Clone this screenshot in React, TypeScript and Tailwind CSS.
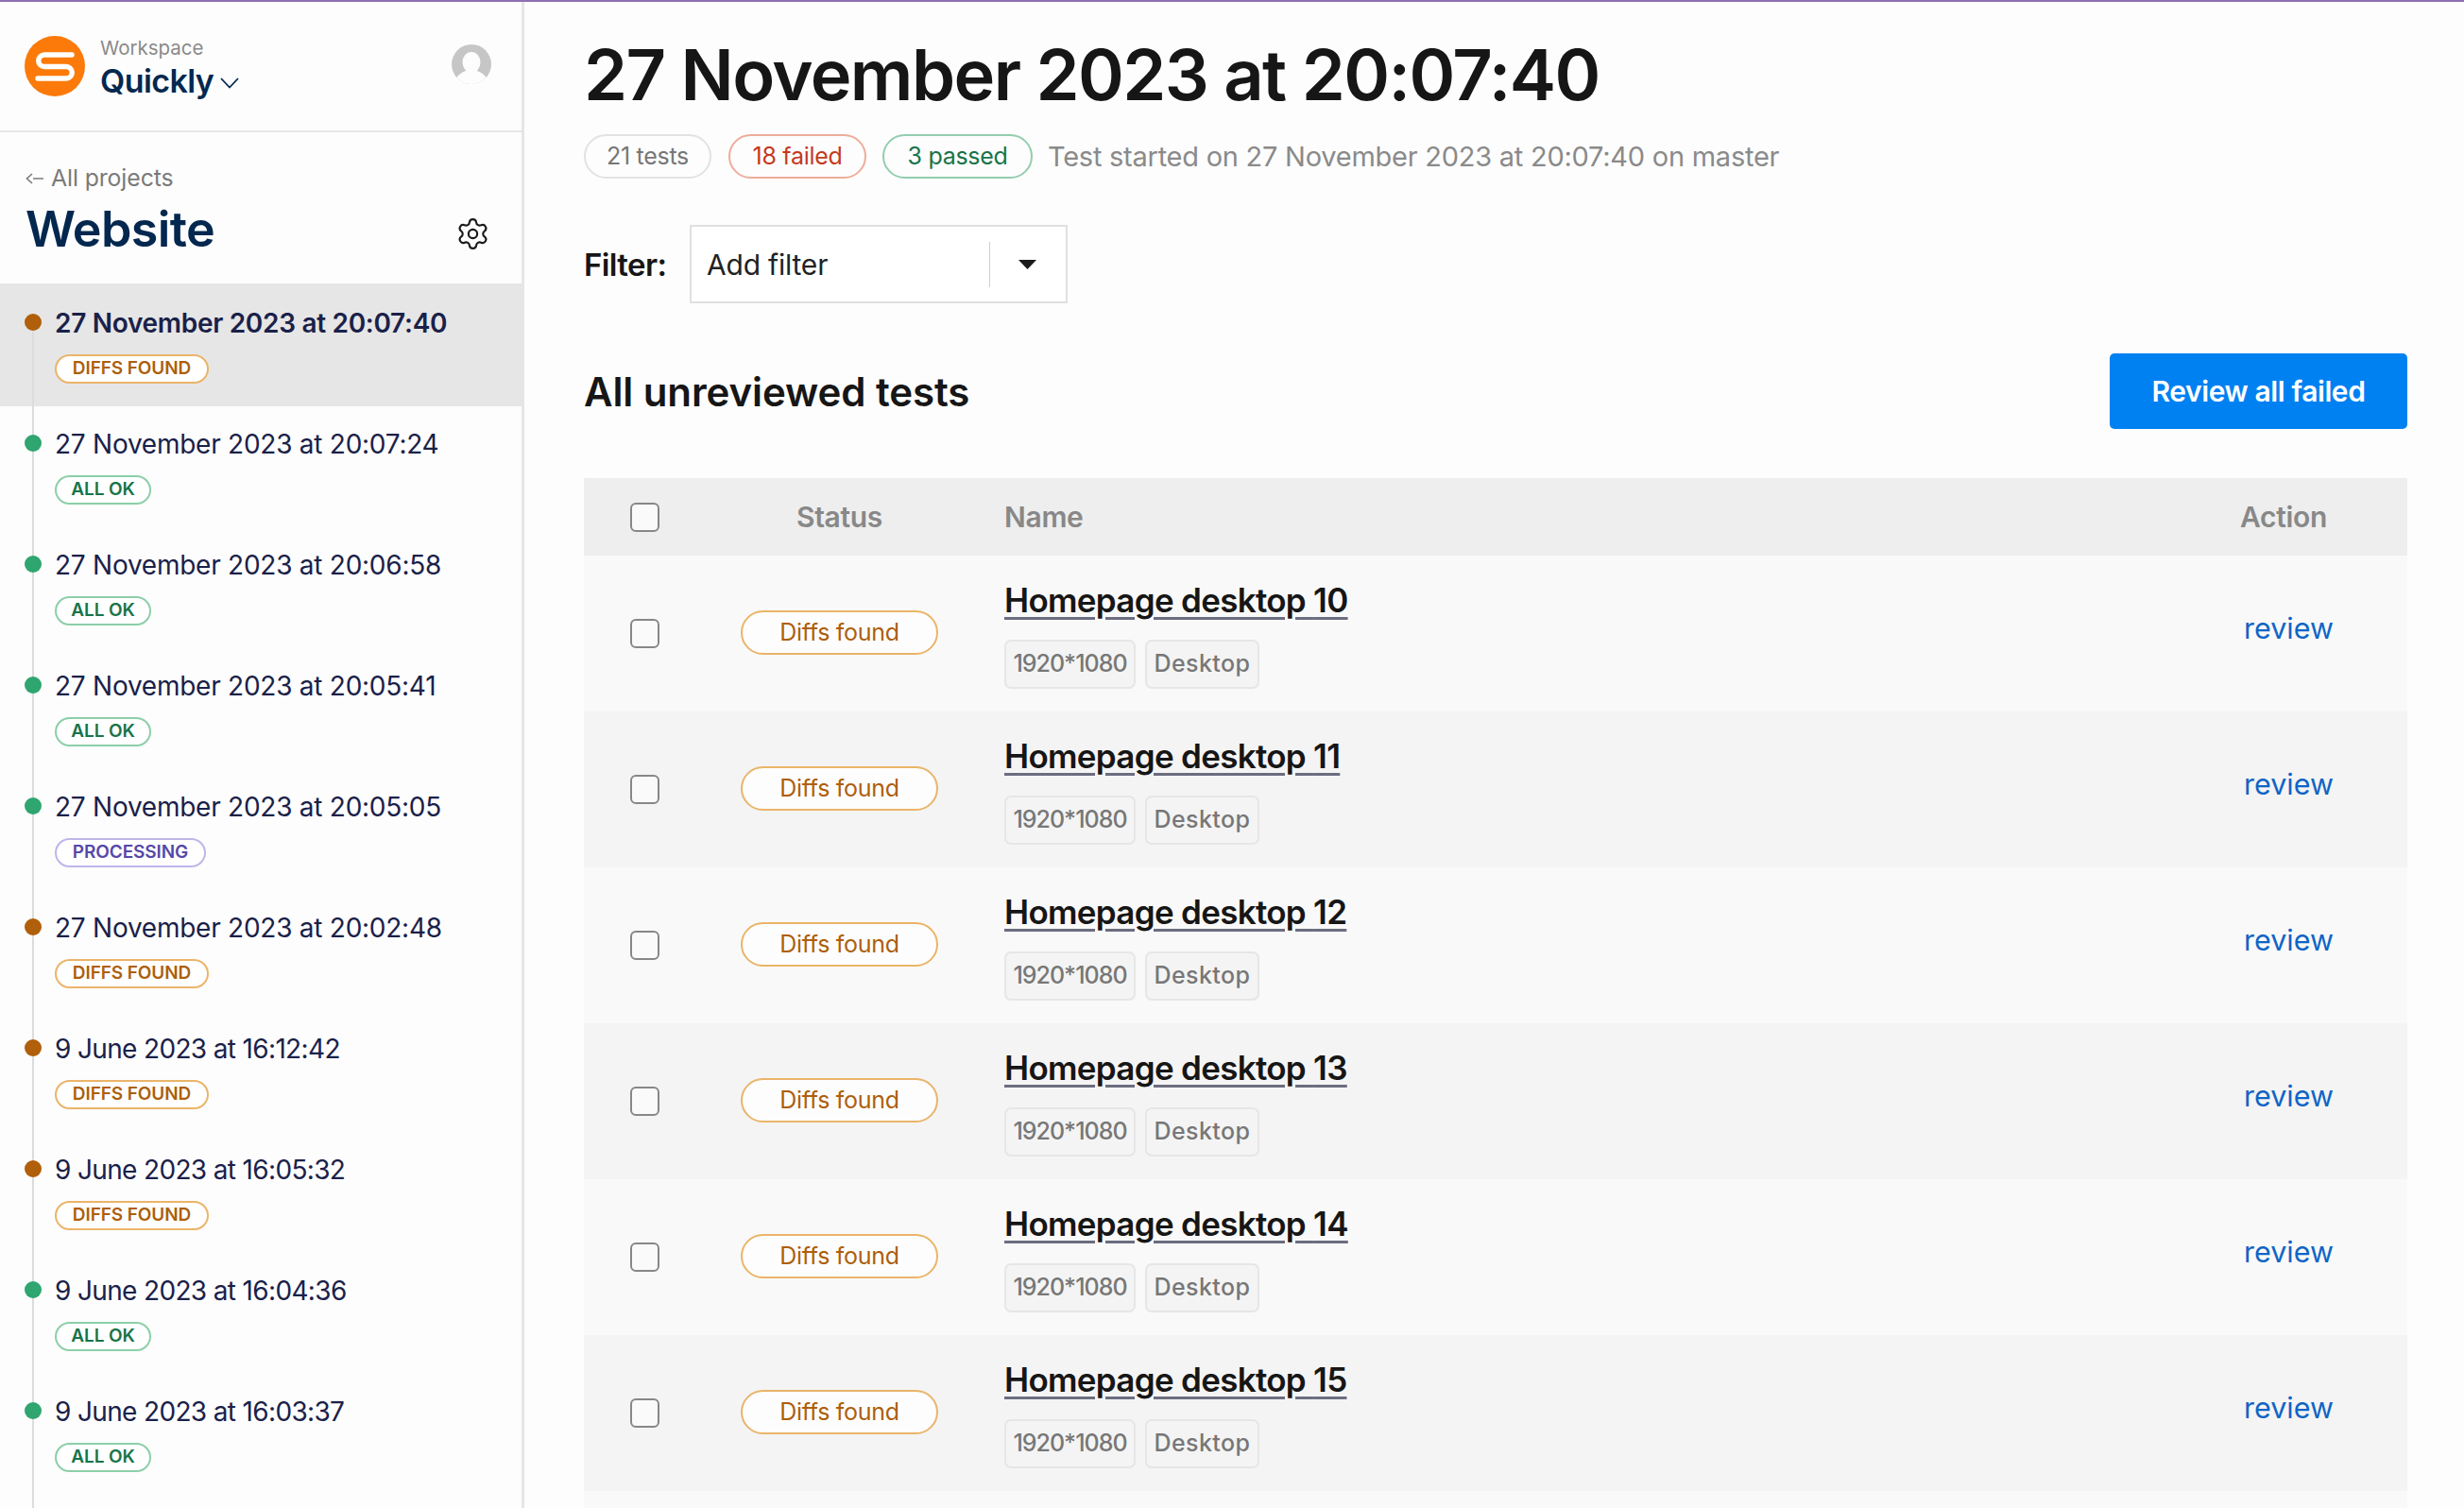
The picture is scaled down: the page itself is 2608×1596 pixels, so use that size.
import { Settings } from "lucide-react";

const runs = [
  { date: "27 November 2023 at 20:07:40", status: "diffs", active: true },
  { date: "27 November 2023 at 20:07:24", status: "ok" },
  { date: "27 November 2023 at 20:06:58", status: "ok" },
  { date: "27 November 2023 at 20:05:41", status: "ok" },
  { date: "27 November 2023 at 20:05:05", status: "processing" },
  { date: "27 November 2023 at 20:02:48", status: "diffs" },
  { date: "9 June 2023 at 16:12:42", status: "diffs", short: true },
  { date: "9 June 2023 at 16:05:32", status: "diffs", short: true },
  { date: "9 June 2023 at 16:04:36", status: "ok", short: true },
  { date: "9 June 2023 at 16:03:37", status: "ok", short: true },
];

const tests = ["10", "11", "12", "13", "14", "15"];

function RunBadge({ status }: { status: string }) {
  if (status === "diffs") {
    return (
      <span className="flex h-[31px] w-[163px] items-center justify-center rounded-full border-2 border-[#ebb469] bg-white text-[19px] font-semibold tracking-[-0.1px] text-[#ad5f0c]">
        DIFFS FOUND
      </span>
    );
  }
  if (status === "processing") {
    return (
      <span className="flex h-[31px] w-[160px] items-center justify-center rounded-full border-2 border-[#bdb6ea] bg-white text-[19px] font-semibold tracking-[-0.1px] text-[#5648a8]">
        PROCESSING
      </span>
    );
  }
  return (
    <span className="flex h-[31px] w-[102px] items-center justify-center rounded-full border-2 border-[#8ccfa8] bg-white text-[19px] font-semibold tracking-[-0.1px] text-[#17744a]">
      ALL OK
    </span>
  );
}

function RunItem({ date, status, active, first, short }: { date: string; status: string; active?: boolean; first?: boolean; short?: boolean }) {
  let titleClass = "h-[34px] whitespace-nowrap text-[28px] leading-[34px] tracking-[-0.25px] text-[#1a2149]";
  if (active) {
    titleClass = "h-[34px] whitespace-nowrap text-[28px] font-semibold leading-[34px] tracking-[-0.3px] text-[#1a2149]";
  } else if (short) {
    titleClass = "h-[34px] whitespace-nowrap text-[28px] leading-[34px] tracking-[-0.65px] text-[#1a2149]";
  }

  return (
    <div className={active ? "mb-[-2px] flex h-[130px] shrink-0 bg-[#e6e6e6] pl-[26px] pt-[25px]" : "flex h-[128px] shrink-0 pl-[26px] pt-[25px]"}>
      <div className="relative mr-[14px] w-[18px]">
        <div className={first ? "absolute bottom-0 left-[8px] top-[17px] w-[2px] bg-[#dcdcdc]" : "absolute bottom-[-24px] left-[8px] top-[-25px] w-[2px] bg-[#dcdcdc]"} />
        <div className={status === "diffs" ? "relative mt-[7px] h-[18px] w-[18px] rounded-full bg-[#b05f0a]" : "relative mt-[7px] h-[18px] w-[18px] rounded-full bg-[#2fa56f]"} />
      </div>
      <div>
        <div className={titleClass}>{date}</div>
        <div className="mt-[16px] flex">
          <RunBadge status={status} />
        </div>
      </div>
    </div>
  );
}

function Sidebar() {
  return (
    <aside className="flex w-[555px] shrink-0 flex-col overflow-hidden border-r-[3px] border-[#e6e6e6]">
      <div className="flex h-[138px] shrink-0 items-start border-b-[2px] border-[#e6e6e6] pl-[26px] pr-[32px] pt-[36px]">
        <svg width="64" height="64" viewBox="0 0 64 64" className="shrink-0">
          <circle cx="32" cy="32" r="32" fill="#fb7a09" />
          <path d="M50 20H21a6.25 6.25 0 0 0 0 12.5h23a6.25 6.25 0 0 1 0 12.5H14" fill="none" stroke="#fff" strokeWidth="5.5" strokeLinecap="round" />
        </svg>
        <div className="ml-[16px]">
          <div className="h-[26px] text-[20.5px] leading-[26px] text-[#8a8a8a]">Workspace</div>
          <div className="flex items-center">
            <span className="text-[34px] font-semibold leading-[44px] tracking-[-0.6px] text-[#04284f]">Quickly</span>
            <svg width="20" height="12" viewBox="0 0 20 12" className="ml-[7px] mt-[3px] shrink-0" fill="none" stroke="#04284f" strokeWidth="1.8">
              <path d="M1 1l9 9.5L19 1" />
            </svg>
          </div>
        </div>
        <svg width="42" height="46" viewBox="0 0 42 46" className="ml-auto mt-[9px] shrink-0">
          <defs>
            <clipPath id="avatar">
              <circle cx="21" cy="21" r="21" />
            </clipPath>
          </defs>
          <circle cx="21" cy="21" r="21" fill="#c6c6c6" />
          <g clipPath="url(#avatar)" fill="#fdfdfd">
            <ellipse cx="21" cy="19" rx="9.5" ry="11" />
            <path d="M1 46c1-10 8-16 14-18h12c6 2 13 8 14 18z" />
          </g>
        </svg>
      </div>
      <div className="flex h-[160px] shrink-0 flex-col pl-[27px] pr-[33px] pt-[31px]">
        <div className="flex h-[36px] items-center text-[#7a7a7a]">
          <svg width="19" height="12" viewBox="0 0 19 12" className="mr-[8px] shrink-0" fill="none" stroke="#7a7a7a" strokeWidth="1.6">
            <path d="M7 1 1.5 6 7 11M8 6h11" />
          </svg>
          <span className="text-[24.8px] tracking-[-0.1px]">All projects</span>
        </div>
        <div className="mt-[4px] flex items-center justify-between">
          <span className="text-[52px] font-semibold leading-[64px] tracking-[-0.6px] text-[#03274f]">Website</span>
          <Settings className="mt-[9px] h-[37px] w-[37px] text-[#1b1b1b]" strokeWidth={1.4} />
        </div>
      </div>
      {runs.map((run, i) => (
        <RunItem key={run.date} {...run} first={i === 0} />
      ))}
    </aside>
  );
}

function Checkbox() {
  return <span className="block h-[31px] w-[31px] rounded-[6px] border-2 border-[#878787] bg-[#fafafa]" />;
}

function TestRow({ num, odd }: { num: string; odd: boolean }) {
  return (
    <div className={odd ? "flex h-[165px] shrink-0 bg-[#f9f9f9]" : "flex h-[165px] shrink-0 bg-[#f4f4f4]"}>
      <div className="w-[166px] shrink-0 pl-[49px] pt-[67px]">
        <Checkbox />
      </div>
      <div className="w-[279px] shrink-0 pt-[58px]">
        <span className="flex h-[47px] w-[209px] items-center justify-center rounded-full border-2 border-[#ebb469] bg-[#fdfdfd] text-[25px] tracking-[-0.3px] text-[#ad5f0c]">
          Diffs found
        </span>
      </div>
      <div className="flex-1 pt-[25px]">
        <a className="block w-fit text-[35px] font-semibold leading-[44px] tracking-[-0.7px] text-[#161616] underline decoration-[#6c6d80] decoration-[3px] underline-offset-[5px]">
          Homepage desktop {num}
        </a>
        <div className="mt-[20px] flex gap-[10px]">
          <span className="flex h-[52px] w-[139px] items-center justify-center rounded-[7px] border-2 border-[#e6e6e6] bg-[#f4f4f4] text-[25px] font-medium tracking-[-1px] text-[#777777]">
            1920*1080
          </span>
          <span className="flex h-[52px] w-[121px] items-center justify-center rounded-[7px] border-2 border-[#e6e6e6] bg-[#f4f4f4] text-[25px] font-medium tracking-[0.4px] text-[#777777]">
            Desktop
          </span>
        </div>
      </div>
      <div className="w-[173px] shrink-0 pt-[55px] text-[30.5px] leading-[44px] text-[#1065c6]">review</div>
    </div>
  );
}

export default function App() {
  return (
    <div className="flex h-screen flex-col overflow-hidden bg-[#fdfdfd] [font-family:Inter,sans-serif]">
      <div className="h-[2px] shrink-0 bg-[#8f6fb5]" />
      <div className="flex min-h-0 flex-1">
        <Sidebar />
        <main className="flex min-w-0 flex-1 flex-col pl-[63px] pr-[60px]">
          <h1 className="mt-[31px] whitespace-nowrap text-[74px] font-semibold leading-[92px] tracking-[-1.6px] text-[#161616]">
            27 November 2023 at 20:07:40
          </h1>
          <div className="mt-[17px] flex items-center">
            <span className="flex h-[47px] w-[135px] items-center justify-center rounded-full border-2 border-[#e2e2e2] text-[25px] tracking-[-0.3px] text-[#777777]">21 tests</span>
            <span className="ml-[18px] flex h-[47px] w-[146px] items-center justify-center rounded-full border-2 border-[#eeac9b] text-[25px] tracking-[-0.3px] text-[#c43a1f]">18 failed</span>
            <span className="ml-[17px] flex h-[47px] w-[159px] items-center justify-center rounded-full border-2 border-[#93cdaf] text-[25px] tracking-[-0.3px] text-[#17744a]">3 passed</span>
            <span className="ml-[16px] whitespace-nowrap text-[29px] tracking-[-0.25px] text-[#8a8a8a]">Test started on 27 November 2023 at 20:07:40 on master</span>
          </div>
          <div className="mt-[49px] flex items-center">
            <span className="mt-[2px] w-[112px] text-[33px] font-semibold tracking-[-0.6px] text-[#161616]">Filter:</span>
            <div className="flex h-[83px] w-[400px] items-center border-2 border-[#e0e0e0] bg-white pl-[16px]">
              <span className="mt-[2px] w-[299px] text-[30px] tracking-[-0.2px] text-[#222222]">Add filter</span>
              <span className="h-[48px] w-px bg-[#cfcfcf]" />
              <svg width="19" height="10" viewBox="0 0 19 10" className="ml-[30px]">
                <path d="M0 0h19L9.5 10z" fill="#1a1a1a" />
              </svg>
            </div>
          </div>
          <div className="mt-[53px] flex h-[80px] items-center justify-between">
            <h2 className="text-[42px] font-semibold tracking-[-0.1px] text-[#161616]">All unreviewed tests</h2>
            <button className="h-[80px] w-[315px] rounded-[5px] bg-[#0081f2] text-[30px] font-semibold tracking-[-0.4px] text-white">
              Review all failed
            </button>
          </div>
          <div className="mt-[52px] flex h-[82px] shrink-0 items-center bg-[#eeeeee]">
            <div className="w-[166px] shrink-0 pl-[49px]">
              <Checkbox />
            </div>
            <div className="w-[279px] shrink-0">
              <div className="w-[209px] text-center text-[30px] font-semibold tracking-[-0.3px] text-[#888888]">Status</div>
            </div>
            <div className="flex-1 text-[30px] font-semibold tracking-[-0.3px] text-[#888888]">Name</div>
            <div className="w-[177px] shrink-0 text-[30px] font-semibold tracking-[-0.3px] text-[#888888]">Action</div>
          </div>
          {tests.map((num, i) => (
            <TestRow key={num} num={num} odd={i % 2 === 0} />
          ))}
          <div className="h-[165px] shrink-0 bg-[#f9f9f9]" />
        </main>
      </div>
    </div>
  );
}
